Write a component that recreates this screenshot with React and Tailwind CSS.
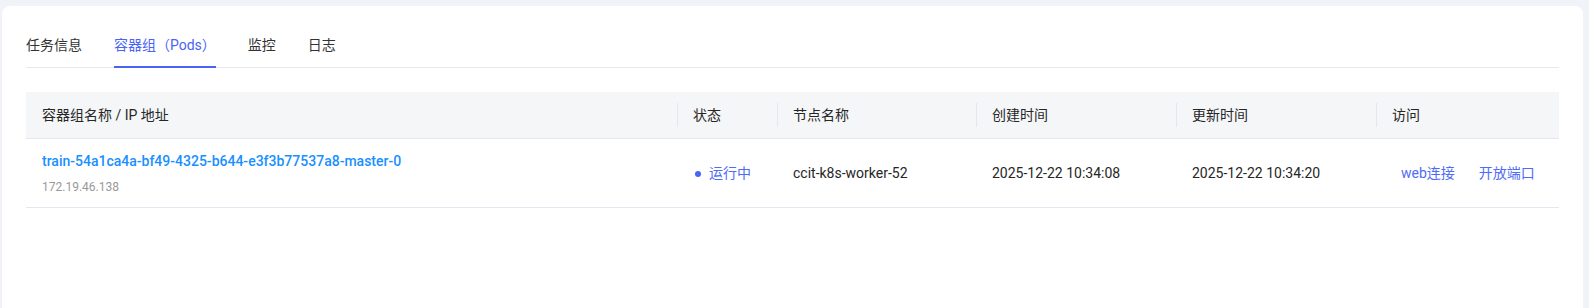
import React from 'react';

const tabs = ['任务信息', '容器组（Pods）', '监控', '日志'];

const columns = ['容器组名称 / IP 地址', '状态', '节点名称', '创建时间', '更新时间', '访问'];

const pod = {
  name: 'train-54a1ca4a-bf49-4325-b644-e3f3b77537a8-master-0',
  ip: '172.19.46.138',
  status: '运行中',
  node: 'ccit-k8s-worker-52',
  created: '2025-12-22 10:34:08',
  updated: '2025-12-22 10:34:20',
};

const gridCols = 'grid grid-cols-[651px_100px_199px_200px_200px_1fr]';

export default function App() {
  return (
    <div
      className="h-screen overflow-hidden bg-[#f0f3f8] pt-[6px] pl-[2px] pr-[6px]"
      style={{ fontFamily: 'Roboto, "Noto Sans CJK SC", sans-serif' }}
    >
      <div className="bg-white rounded-lg px-6 pt-[22px] h-[330px]">
        {/* Tabs */}
        <div className="flex gap-8 border-b border-[#e4e8ef] h-[40px]">
          {tabs.map((t, i) => (
            <div
              key={t}
              className={`relative pt-[6px] text-[14px] leading-[22px] ${
                i === 1 ? 'text-[#4a63f5]' : 'text-[#333]'
              }`}
            >
              {t}
              {i === 1 && (
                <span className="absolute left-0 right-0 bottom-[-1px] h-[2px] bg-[#4a63f5]" />
              )}
            </div>
          ))}
        </div>

        {/* Table */}
        <div className="mt-6">
          <div className={`${gridCols} h-[47px] bg-[#f5f6f8] border-b border-[#e3e8f0]`}>
            {columns.map((c, i) => (
              <div key={c} className="flex items-center text-[14px] text-[#262626]">
                {i > 0 && <span className="w-px h-[24px] bg-[#e3e8f0]" />}
                <span className={i > 0 ? 'ml-[15px]' : 'ml-4'}>{c}</span>
              </div>
            ))}
          </div>

          <div className={`${gridCols} h-[69px] border-b border-[#e3e8f0] text-[14px] text-[#262626]`}>
            <div className="flex flex-col justify-center pl-4 pt-[1px]">
              <span className="text-[#1890ff] font-medium leading-[22px]">{pod.name}</span>
              <span className="mt-[5px] text-[12px] leading-[20px] text-[#999]">{pod.ip}</span>
            </div>
            <div className="flex items-center pl-4 pt-[1px]">
              <span className="w-[6px] h-[6px] rounded-full bg-[#4a63f5] ml-[2px]" />
              <span className="ml-[8px] text-[#4f6cf7]">{pod.status}</span>
            </div>
            <div className="flex items-center pl-4 pt-[1px]">{pod.node}</div>
            <div className="flex items-center pl-4 pt-[1px]">{pod.created}</div>
            <div className="flex items-center pl-4 pt-[1px]">{pod.updated}</div>
            <div className="flex items-center pl-[25px] pt-[1px] gap-6 text-[#4f6cf7]">
              <span>web连接</span>
              <span>开放端口</span>
            </div>
          </div>
        </div>
      </div>
    </div>
  );
}
